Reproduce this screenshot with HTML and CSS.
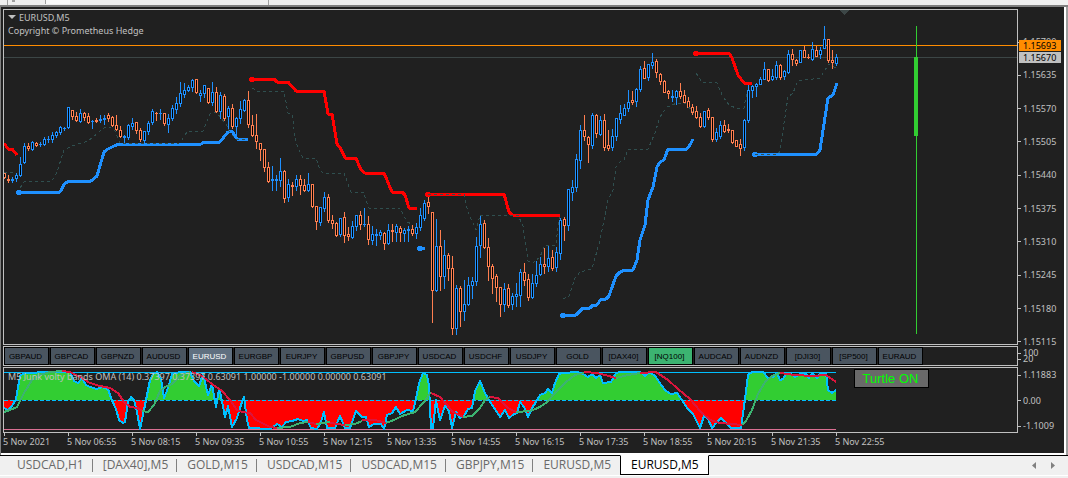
FILE: index.html
```
<!DOCTYPE html>
<html lang="en">
<head>
    <meta charset="UTF-8">
    <meta name="viewport" content="width=device-width, initial-scale=1.0">
    <title>EURUSD,M5</title>
    <link rel="stylesheet" href="styles.css">
</head>
<body>
    <div class="toolbar">
        <span class="grip"></span>
        <span class="tool"></span>
        <span class="tool-on"></span>
        <span class="tool-end"></span>
    </div>
    <div class="window">
        <div class="terminal">
            <div class="pane price">
                <div class="plot">
                    <svg id="priceChart"></svg>
                    <div class="title">
                        <p><span class="arrow"></span>EURUSD,M5</p>
                        <p>Copyright © Prometheus Hedge</p>
                    </div>
                </div>
                <div class="scale">
                    <span>1.15700</span>
                    <span>1.15635</span>
                    <span>1.15570</span>
                    <span>1.15505</span>
                    <span>1.15440</span>
                    <span>1.15375</span>
                    <span>1.15310</span>
                    <span>1.15245</span>
                    <span>1.15180</span>
                    <span>1.15115</span>
                    <b class="tag ask">1.15693</b>
                    <b class="tag bid">1.15670</b>
                </div>
            </div>
            <div class="pane symbols">
                <div class="plot">
                    <button>GBPAUD</button>
                    <button>GBPCAD</button>
                    <button>GBPNZD</button>
                    <button>AUDUSD</button>
                    <button class="current">EURUSD</button>
                    <button>EURGBP</button>
                    <button>EURJPY</button>
                    <button>GBPUSD</button>
                    <button>GBPJPY</button>
                    <button>USDCAD</button>
                    <button>USDCHF</button>
                    <button>USDJPY</button>
                    <button>GOLD</button>
                    <button>[DAX40]</button>
                    <button class="signal">[NQ100]</button>
                    <button>AUDCAD</button>
                    <button>AUDNZD</button>
                    <button>[DJI30]</button>
                    <button>[SP500]</button>
                    <button>EURAUD</button>
                </div>
                <div class="scale">
                    <span>100</span>
                    <span>20</span>
                </div>
            </div>
            <div class="pane volty">
                <div class="plot">
                    <svg id="voltyChart"></svg>
                    <p class="title">M5 Junk volty bands OMA (14) 0.37397 0.37397 0.63091 1.00000 -1.00000 0.00000 0.63091</p>
                    <button class="turtle">Turtle ON</button>
                </div>
                <div class="scale">
                    <span>1.11883</span>
                    <span>0.00</span>
                    <span>-1.1009</span>
                </div>
            </div>
            <div class="times">
                <span>5 Nov 2021</span>
                <span>5 Nov 06:55</span>
                <span>5 Nov 08:15</span>
                <span>5 Nov 09:35</span>
                <span>5 Nov 10:55</span>
                <span>5 Nov 12:15</span>
                <span>5 Nov 13:35</span>
                <span>5 Nov 14:55</span>
                <span>5 Nov 16:15</span>
                <span>5 Nov 17:35</span>
                <span>5 Nov 18:55</span>
                <span>5 Nov 20:15</span>
                <span>5 Nov 21:35</span>
                <span>5 Nov 22:55</span>
            </div>
        </div>
    </div>
    <div class="tabs">
        <a href="#">USDCAD,H1</a>
        <a href="#">[DAX40],M5</a>
        <a href="#">GOLD,M15</a>
        <a href="#">USDCAD,M15</a>
        <a href="#">USDCAD,M15</a>
        <a href="#">GBPJPY,M15</a>
        <a href="#">EURUSD,M5</a>
        <a href="#" class="active">EURUSD,M5</a>
        <div class="scroll">
            <button aria-label="Previous"><svg width="4" height="7"><path d="M4 0V7L0 3.5Z"/></svg></button>
            <button aria-label="Next"><svg width="4" height="7"><path d="M0 0V7L4 3.5Z"/></svg></button>
        </div>
    </div>
    <script src="chart.js"></script>
</body>
</html>
```

FILE: styles.css
```
* {
    box-sizing: border-box;
}
body {
    margin: 0;
    min-height: 100vh;
    display: flex;
    flex-direction: column;
    background-color: #f0f0f0;
    font-family: "Noto Sans", sans-serif;
    overflow: hidden;
}
p {
    margin: 0;
}
button {
    padding: 0;
    font-family: "Liberation Sans", sans-serif;
}
.toolbar {
    display: flex;
    height: 5px;
    padding-left: 7px;
    background-color: #f0f0f0;
}
.grip {
    width: 5px;
    border-left: 1px solid #a0a0a0;
}
.tool {
    width: 3px;
    height: 2px;
    background-color: #a0a0a0;
}
.tool-on {
    width: 25px;
    height: 4px;
    margin-left: 30px;
    border-left: 1px solid #a0a0a0;
    background-color: #fafafa;
}
.tool-end {
    margin-left: 198px;
    border-left: 1px solid #a0a0a0;
}
.window {
    padding-right: 2px;
    border-top: 2px solid #808080;
    border-left: 1px solid #808080;
    background-color: #a0a0a0;
}
.terminal {
    display: flex;
    flex-direction: column;
    gap: 1px;
    padding: 2px 0 0 2px;
    background-color: #202020;
    border-right: 2px solid #fff;
    border-bottom: 2px solid #fff;
    color: #c0c0c0;
    font-size: 9px;
    line-height: 12px;
}

/* panes */
.pane {
    display: flex;
}
.plot {
    position: relative;
    flex: 1;
    min-width: 0;
    border: 1px solid #c0c0c0;
    overflow: hidden;
}
.plot > svg {
    display: block;
    width: 100%;
}
.scale {
    position: relative;
    display: flex;
    flex-direction: column;
    justify-content: space-between;
    width: 46px;
}
.scale span {
    display: flex;
    align-items: center;
    gap: 2px;
}
.scale span::before {
    content: "";
    width: 3px;
    height: 1px;
    background-color: #c0c0c0;
}
.price .plot {
    height: 336px;
}
.price svg {
    height: 334px;
}
.price .scale {
    padding-top: 27px;
    margin-bottom: -3px;
}
.title {
    position: absolute;
    top: 1px;
    left: 4px;
    line-height: 13px;
}
.arrow {
    display: inline-block;
    margin-right: 3px;
    border: 4px solid transparent;
    border-top-color: #c0c0c0;
    border-bottom: 0;
    vertical-align: 2px;
}
.tag {
    position: absolute;
    left: 1px;
    width: 42px;
    padding-left: 4px;
    color: #000;
    font-weight: normal;
    line-height: 11px;
}
.ask {
    top: 31px;
    background-color: #ff8c00;
}
.bid {
    top: 43px;
    background-color: #c0c0c0;
}
.symbols .plot {
    display: flex;
    gap: 1px;
    height: 20px;
}
.symbols button {
    width: 45px;
    padding-right: 2px;
    border: 1px solid #000;
    background-color: #4a5560;
    color: #000;
    font-size: 8px;
}
.symbols .current {
    background-color: #607080;
    color: #fff;
}
.symbols .signal {
    background-color: #3cb371;
}
.symbols .scale {
    justify-content: center;
}
.symbols .scale span {
    line-height: 6px;
}
.volty .plot {
    height: 66px;
}
.volty svg {
    height: 64px;
}
.volty .title {
    top: 2px;
}
.volty .scale {
    padding: 2px 0 1px;
}
.turtle {
    position: absolute;
    top: 1px;
    left: 850px;
    width: 75px;
    height: 19px;
    padding-right: 2px;
    border: 1px solid #000;
    background-color: #696969;
    color: #00ff00;
    font-size: 13px;
}
.times {
    display: flex;
    height: 20px;
    margin-top: -1px;
}
.times span {
    flex: 0 0 64px;
    white-space: nowrap;
}
.times span::before {
    content: "";
    display: block;
    width: 1px;
    height: 3px;
    margin-left: 1px;
    background-color: #c0c0c0;
}

/* chart tabs */
.tabs {
    display: flex;
    height: 21px;
    border-top: 1px solid #000;
    border-bottom: 1px solid #fff;
    padding-left: 7px;
    font-family: "Open Sans", sans-serif;
    font-size: 12px;
    line-height: 18px;
}
.tabs a {
    padding: 0 9px 0 10px;
    color: #696969;
    text-decoration: none;
    background: linear-gradient(#808080, #808080) right 3px / 1px 13px no-repeat;
}
.tabs a:nth-child(7) {
    background: none;
}
.tabs .active {
    margin-top: -1px;
    border: 1px solid #000;
    border-top-color: #fff;
    background: #fff;
    color: #000;
}
.scroll {
    display: flex;
    gap: 15px;
    margin-left: auto;
    padding-right: 13px;
}
.scroll button {
    display: flex;
    align-items: center;
    border: 0;
    background: none;
}
.scroll svg {
    fill: #808080;
}
```

FILE: chart.js
```
// one candle per 4px: colour (b up, o down), high, body top, body bottom, low
const candles = `
o173,173,177,178 o175,179,180,182 b177,179,180,182 b173,175,178,181 b157,164,175,176 b143,146,162,163
o143,146,148,150 b141,142,149,150 o142,143,145,146 b142,144,144,146 b137,139,144,145 b136,139,139,142
b132,135,139,142 b131,132,135,137 b126,127,132,134 b127,128,128,130 b107,107,127,128 o110,110,116,119
o112,116,120,121 b109,113,121,122 o112,113,117,120 o113,116,122,123 b120,121,121,128 o118,120,121,122
b115,119,120,122 b115,118,119,124 o113,115,118,121 o116,117,125,126 o115,125,129,130 o126,130,136,137
b135,136,137,143 b124,125,137,139 b118,123,126,129 o122,122,130,133 o128,130,139,141 b131,131,140,143
b121,123,131,134 b109,111,122,124 o112,113,113,120 b109,113,113,119 o113,113,123,125 b114,118,124,132
b105,108,118,120 b97,103,109,113 b82,93,103,106 b83,90,94,97 b85,87,90,91 b79,80,87,91
o79,79,92,93 b90,93,95,101 b85,85,93,97 o88,88,102,103 b82,92,102,105 o87,92,111,112
b92,95,111,118 o94,96,118,120 b106,108,116,130 o104,108,126,128 b117,118,126,138 b101,109,118,123
b99,100,110,111 o91,100,124,127 o115,125,135,136 o114,135,141,148 o143,143,149,160 o149,149,167,171
o162,167,181,182 b166,179,180,190 b175,179,180,190 b158,171,180,186 o170,171,198,202 b179,184,197,201
o182,185,186,195 b175,179,186,190 o175,179,185,194 o179,185,190,191 b173,184,190,191 o184,184,206,207
o206,206,221,229 b207,207,222,225 b192,197,208,211 o194,197,220,222 o215,220,223,228 o222,223,235,236
b218,218,234,236 o212,217,235,242 o227,234,236,240 b221,226,237,238 b215,215,226,230 o211,215,224,229
b208,224,224,226 o216,224,239,244 b226,234,240,244 b229,234,235,245 b230,232,235,239 o232,233,243,249
b224,230,243,244 o224,230,231,241 b224,226,232,241 o226,228,232,241 b228,230,233,241 b226,229,230,241
o225,229,233,235 b223,227,233,238 b208,215,227,230 b200,203,218,220 o196,202,206,213 o212,212,290,322
b219,246,290,291 o230,246,276,290 b240,255,276,288 o253,255,268,280 o256,268,328,334 b285,288,328,334
o286,288,311,326 b280,304,311,320 b277,285,304,305 b277,281,285,298 b237,246,281,285 b215,224,245,257
o220,223,247,248 o238,247,266,280 o264,266,278,293 o274,276,287,301 o287,287,304,316 b283,289,304,311
o284,288,305,307 b293,296,304,309 b283,294,296,306 b269,272,295,306 o263,272,280,285 o274,279,297,300
b274,283,297,298 b261,275,283,286 b257,264,274,275 o248,264,266,273 b245,258,266,271 o250,257,268,270
b247,252,267,271 b218,220,253,259 o217,219,225,240 b189,189,225,230 b180,187,192,200 b154,159,187,191
b125,130,160,168 o115,130,136,140 o136,137,144,162 b113,115,145,148 o114,115,133,137 b116,120,134,135
o114,120,147,150 o130,145,148,150 b129,136,147,150 b118,118,136,140 b105,113,119,123 b104,108,115,115
b90,102,108,111 o91,100,102,104 b88,89,101,106 b66,69,89,91 o61,68,78,78 b64,64,77,80
b53,62,65,68 o59,61,72,77 o73,74,81,84 o80,81,92,92 o90,91,93,98 b90,96,97,101
b90,91,97,104 o83,91,96,98 o90,95,102,103 o97,101,107,107 o104,107,112,114 o106,111,117,118
o113,117,126,127 b111,111,126,127 o108,110,117,119 o117,117,139,141 b128,132,139,141 b121,125,136,138
o120,125,131,132 o124,129,130,132 o130,130,142,143 o140,140,146,146 o139,144,148,155 b119,120,147,150
b84,90,120,122 b85,86,90,97 b83,84,86,96 b77,79,84,84 b62,69,79,79 o69,69,80,81
b69,76,79,80 b61,65,77,79 o64,65,77,79 b70,71,76,79 b50,54,72,73 o49,54,59,65
o59,60,63,65 b50,50,62,62 o46,50,57,57 o54,57,57,58 b42,49,59,60 o46,50,56,56
b47,50,54,58 b26,39,48,48 o39,39,60,62 o50,60,62,68 b54,57,63,65`.trim().split(/\s+/);

const supports = [
    '19,192 60,192 65,183 70,181 91,181 97,176 104,152 108,149 114,146 119,144 201,144 204,142 220,142 228,132 232,131 237,139 248,139',
    '420,248 425,248',
    '563,315 576,315 583,308 590,308 593,305 597,305 601,299 606,299 609,296 616,276 620,272 625,270 633,270 637,260 640,240 645,225 648,200 653,187 657,167 660,162 664,160 668,149 687,149 690,145 693,139',
    '755,154 817,154 820,150 828,98 833,95 837,83'
];
const resistances = [
    '252,79 274,79 277,82 288,82 296,91 324,91 328,114 332,114 337,144 341,149 345,158 356,158 361,170 365,173 384,173 392,192 402,192 405,195 409,208 417,208',
    '428,194 504,194 509,212 512,215 560,216',
    '696,53 729,53 732,58 738,75 744,83 752,83'
];
const midlines = [
    '4,172 14,172',
    '20,188 24,182 30,181 52,181 57,172 64,150 72,146 88,141 104,128 110,127 115,131 120,143 124,144 180,143 187,132 203,131 210,114 216,112 226,124 230,133 236,139 248,139',
    '252,88 257,91 284,91 288,113 292,114 296,143 303,158 316,158 320,170 323,173 344,173 351,192 363,192 369,208 400,208 407,222 412,224',
    '428,194 464,194 468,212 476,230 480,215 518,215 523,226 528,261 533,263 540,257 545,245 556,245 558,225 560,217',
    '563,299 569,296 575,278 580,272 592,269 600,240 608,200 613,190 616,167 620,162 624,160 628,149 648,149 655,133 660,117 667,107 677,103 685,103 693,112',
    '696,73 702,82 717,83 723,97 730,106 737,108 744,108 747,91',
    '755,154 778,154 780,151 783,130 788,97 793,93 798,81 820,78 829,64 836,68'
];

const volty = '4,408 8,410 12,406 16,399 20,376 24,373 50,372 70,372 74,381 78,383 82,378 86,385 90,387 97,389 102,387 108,389 111,398 116,409 119,420 123,423 125,422 128,402 131,397 134,400 137,412 140,429 144,410 150,380 153,374 157,372 161,379 164,398 168,388 172,374 180,372 190,372 194,381 199,386 203,374 208,395 212,384 216,407 219,389 221,396 225,417 228,406 232,427 237,418 241,405 244,397 247,420 249,428 270,429 277,424 282,427 286,422 292,421 298,419 303,421 307,420 311,428 317,429 321,422 324,412 327,428 335,428 340,416 345,428 350,428 356,411 362,417 366,417 369,427 374,424 381,424 384,429 387,415 392,413 396,407 400,414 407,410 413,411 416,399 419,383 423,373 427,375 429,386 431,428 433,428 436,400 440,420 445,406 449,411 452,428 456,412 460,418 464,416 468,409 472,408 475,391 480,381 485,393 490,402 495,409 500,417 505,410 509,418 514,414 517,413 520,402 524,407 528,417 532,408 536,402 540,395 545,393 548,389 552,393 555,383 559,374 562,373 578,372 583,374 588,377 592,374 596,378 600,375 603,383 611,382 616,373 620,372 640,372 645,376 650,372 656,377 661,385 666,391 671,394 677,393 682,400 687,408 693,414 700,428 704,416 708,419 712,428 717,422 721,418 726,423 731,428 741,428 745,399 748,375 752,372 763,372 768,378 773,377 777,373 780,380 783,379 786,374 790,373 795,377 800,374 806,374 809,378 812,373 817,378 820,374 826,373 828,390 832,393 836,390';
const rising = [
    '4,412 10,410 17,407 24,393 32,380 40,375 50,372 62,371',
    '142,411 148,412 154,405 160,391 165,387 172,384 180,376 190,372',
    '277,428 290,427 300,423 308,422', '316,424 330,422', '345,425 355,424 362,421',
    '386,423 394,420 402,416 415,412 424,402 431,392',
    '463,417 472,416 480,408 485,400 490,397',
    '516,412 530,411 538,408 546,403 556,392 566,382 575,375 584,373',
    '616,378 628,375 640,373',
    '742,425 746,421 752,410 758,394 765,382 772,376 780,373'
];
const falling = [
    '62,371 70,372 80,377 90,383 100,386 110,388 118,393 124,402 130,407 138,408 142,411',
    '192,372 202,376 212,384 222,391 230,400 237,410 242,412 250,413 256,420 270,427 277,428',
    '308,422 316,424', '330,423 345,425', '362,420 375,420 386,423',
    '431,393 440,397 453,412 463,417', '490,397 498,398 508,408 516,412',
    '584,372 597,373 605,375 616,378',
    '640,373 656,372 668,380 678,389 690,399 700,411 710,420 720,423 742,425',
    '780,373 795,375 812,376 826,375 836,382'
];

function line(points, color, width, dash) {
    return `<polyline points="${points}" fill="none" stroke="${color}" stroke-width="${width}" stroke-linejoin="round" stroke-dasharray="${dash || 'none'}"/>`;
}

function rect(x, y, w, h, color) {
    return `<rect x="${x}" y="${y}" width="${w}" height="${h}" fill="${color}"/>`;
}

function trend(points, color) {
    let [x, y] = points.split(' ')[0].split(',').map(Number);
    return line(points, color, 3) + rect(x - 2, y - 2, 4, 5, color) + rect(x - 3, y - 1, 6, 3, color);
}

function drawPrice() {
    // level lines run on past the clipped right edge
    let out = rect(0, 45, 4000, 1, '#ff8c00') + rect(0, 57, 4000, 1, '#3c4646');
    out += '<path d="M839 10H849L844 15Z" fill="#3c4646"/>';
    candles.forEach(function(candle, i) {
        let x = 4 + i * 4;
        let color = candle[0] == 'b' ? '#1e90ff' : '#ff7f50';
        let [high, top, bottom, low] = candle.slice(1).split(',').map(Number);
        out += rect(x, high, 1, low - high + 1, color) + rect(x - 1, top, 3, bottom - top + 1, color);
        if (bottom - top > 1) {
            out += rect(x, top + 1, 1, bottom - top - 1, '#000');
        }
    });
    out += line('4,143 8,149 12,149 17,155', '#ff0000', 3);
    supports.forEach(p => out += trend(p, '#1e90ff'));
    resistances.forEach(p => out += trend(p, '#ff0000'));
    midlines.forEach(p => out += line(p, '#2f4f4f', 1, '3 3'));
    out += rect(916, 26, 1, 308, '#32cd32') + rect(914, 57, 4, 79, '#32cd32');
    document.getElementById('priceChart').innerHTML = `<g transform="translate(-4 -10)" shape-rendering="crispEdges">${out}</g>`;
}

function drawVolty() {
    let area = `4,400 ${volty} 836,400`;
    let out = '<clipPath id="above"><rect x="0" y="368" width="900" height="32"/></clipPath>';
    out += '<clipPath id="below"><rect x="0" y="400" width="900" height="32"/></clipPath>';
    out += `<polygon points="${area}" fill="#32cd32" clip-path="url(#above)"/>`;
    out += `<polygon points="${area}" fill="#ff0000" clip-path="url(#below)"/>`;
    out += rect(4, 372, 832, 1, '#00bfff') + rect(4, 429, 832, 1, '#db7093');
    out += line('4,400.5 836,400.5', '#00bfff', 1, '4 2');
    out += line(volty, '#00bfff', 2);
    rising.forEach(p => out += line(p, '#3cb371', 2));
    falling.forEach(p => out += line(p, '#dc143c', 2));
    document.getElementById('voltyChart').innerHTML = `<g transform="translate(-4 -368)" shape-rendering="crispEdges">${out}</g>`;
}

drawPrice();
drawVolty();
```
